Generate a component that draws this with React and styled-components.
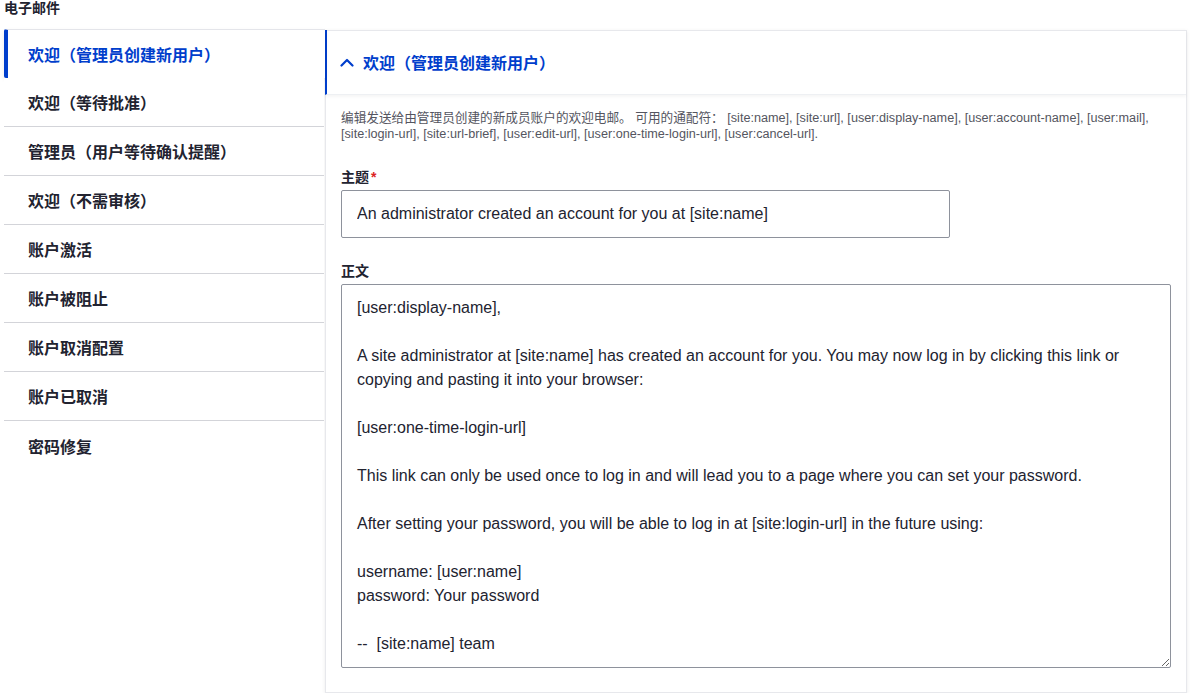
import React from 'react';
import styled, { createGlobalStyle } from 'styled-components';

const GlobalStyle = createGlobalStyle`
  body {
    margin: 0;
    background: #fff;
    font-family: "Liberation Sans", Arial, "Noto Sans CJK SC", sans-serif;
    color: #222330;
  }
  * { box-sizing: border-box; }
`;

const tabs = [
  '欢迎（管理员创建新用户）',
  '欢迎（等待批准）',
  '管理员（用户等待确认提醒）',
  '欢迎（不需审核）',
  '账户激活',
  '账户被阻止',
  '账户取消配置',
  '账户已取消',
  '密码修复',
];

const bodyText = `[user:display-name],

A site administrator at [site:name] has created an account for you. You may now log in by clicking this link or copying and pasting it into your browser:

[user:one-time-login-url]

This link can only be used once to log in and will lead you to a page where you can set your password.

After setting your password, you will be able to log in at [site:login-url] in the future using:

username: [user:name]
password: Your password

--  [site:name] team`;

const Page = styled.div`
  padding: 0 5px 0 4px;
`;

const Heading = styled.h2`
  margin: 0 0 14px;
  font-size: 14px;
  line-height: 16px;
  font-weight: 700;
`;

const Layout = styled.div`
  display: flex;
  align-items: flex-start;
`;

const Menu = styled.ul`
  list-style: none;
  margin: -1px 0 0;
  padding: 0;
  width: 321px;
  flex: none;
  position: relative;
  z-index: 1;
`;

const Tab = styled.li`
  height: 49px;
  display: flex;
  align-items: center;
  padding-left: 24px;
  font-size: 16px;
  font-weight: 700;
  color: ${(p) => (p.$active ? '#003ecc' : '#222330')};
  background: #fff;
  border-bottom: ${(p) => (p.$active || p.$last ? 'none' : '1px solid #d3d4d9')};
  margin-right: ${(p) => (p.$active ? '0' : '1px')};
  ${(p) =>
    p.$active &&
    `
    border-left: 4px solid #003ecc;
    padding-left: 20px;
    border-radius: 2px 0 0 2px;
    border-top: 1px solid #e4e5ea;
    box-shadow: 0 2px 4px rgba(0, 0, 0, 0.08);
  `}
`;

const Pane = styled.div`
  flex: 1;
  background: #fff;
  border: 1px solid #e7e8ec;
  box-shadow: 0 1px 4px rgba(0, 0, 0, 0.08);
`;

const Summary = styled.div`
  height: 65px;
  margin: -1px 0 0 -1px;
  display: flex;
  align-items: center;
  gap: 9px;
  padding-left: 13px;
  border-left: 2px solid #003ecc;
  border-bottom: 1px solid #eef0f3;
  box-shadow: 0 2px 3px rgba(0, 0, 0, 0.04);
  color: #003ecc;
  font-size: 16px;
  font-weight: 700;
`;

const Content = styled.div`
  padding: 15px 15px 24px;
`;

const Description = styled.p`
  margin: 0 0 26px;
  font-size: 12.65px;
  line-height: 16px;
  color: #545560;
`;

const Field = styled.div`
  & + & {
    margin-top: 24px;
  }
`;

const Label = styled.label`
  display: block;
  font-size: 14px;
  line-height: 18px;
  font-weight: 700;
  margin-bottom: 4px;
`;

const Required = styled.span`
  color: #dc2323;
  margin-left: 2px;
`;

const TextInput = styled.input`
  display: block;
  width: 609px;
  height: 48px;
  padding: 0 15px;
  border: 1px solid #8e929c;
  border-radius: 2px;
  font: inherit;
  font-size: 16px;
  color: #222330;
  outline: none;
`;

const TextArea = styled.textarea`
  display: block;
  width: 100%;
  height: 384px;
  padding: 11px 15px;
  border: 1px solid #8e929c;
  border-radius: 2px;
  font: inherit;
  font-size: 16px;
  line-height: 24px;
  color: #222330;
  resize: vertical;
  outline: none;
  overflow: hidden;
`;

function Chevron() {
  return (
    <svg width="14" height="9" viewBox="0 0 14 9" fill="none">
      <polyline points="1.5,7.5 7,2 12.5,7.5" stroke="#003ecc" strokeWidth="2.2" strokeLinecap="round" strokeLinejoin="round" />
    </svg>
  );
}

export default function App() {
  return (
    <Page>
      <GlobalStyle />
      <Heading>电子邮件</Heading>
      <Layout>
        <Menu>
          {tabs.map((t, i) => (
            <Tab key={t} $active={i === 0} $last={i === tabs.length - 1}>
              {t}
            </Tab>
          ))}
        </Menu>
        <Pane>
          <Summary>
            <Chevron />
            欢迎（管理员创建新用户）
          </Summary>
          <Content>
            <Description>
              编辑发送给由管理员创建的新成员账户的欢迎电邮。 可用的通配符： [site:name], [site:url], [user:display-name], [user:account-name], [user:mail], [site:login-url], [site:url-brief], [user:edit-url], [user:one-time-login-url], [user:cancel-url].
            </Description>
            <Field>
              <Label>
                主题<Required>*</Required>
              </Label>
              <TextInput defaultValue="An administrator created an account for you at [site:name]" />
            </Field>
            <Field>
              <Label>正文</Label>
              <TextArea defaultValue={bodyText} />
            </Field>
          </Content>
        </Pane>
      </Layout>
    </Page>
  );
}
